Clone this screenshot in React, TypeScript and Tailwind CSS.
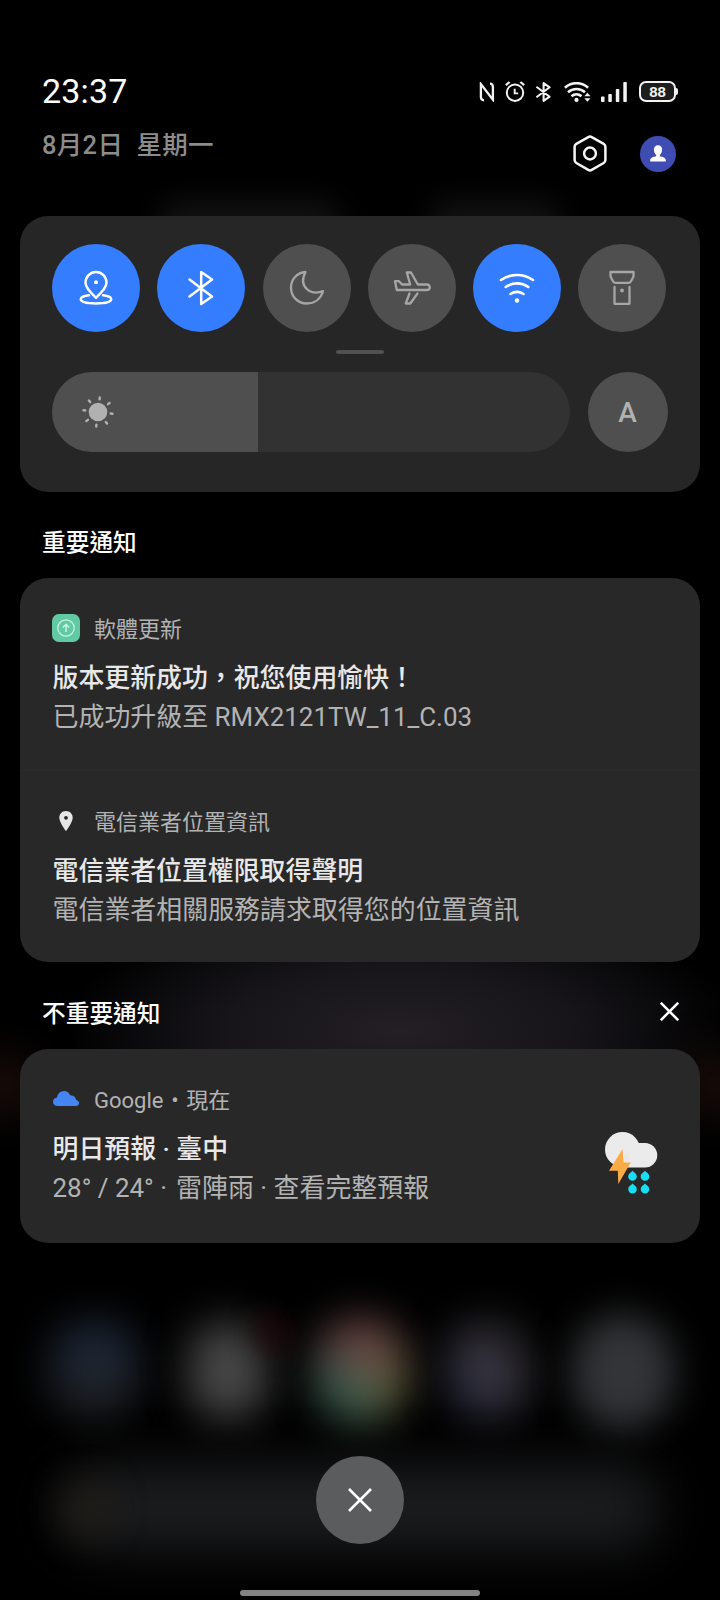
/**
 * Notification shade
 * Design: dark translucent cards over a dimmed, blurred home screen
 * Content: status bar, quick toggles, brightness, notification groups
 */
import type { ReactNode } from "react";

const FONT = "font-['Roboto','Noto_Sans_CJK_TC',sans-serif]";

/* ---------- Status bar icons ---------- */

function NfcIcon() {
  return (
    <svg width="16" height="20" viewBox="0 0 16 20" fill="none" stroke="#f2f2f2" strokeWidth="2.3">
      <path d="M5 18.300C2.800 18.200 1.900 17 1.900 15V2.100L13.900 17.700V5c0-2-.7-3.300-2.900-3.400" />
    </svg>
  );
}

function AlarmIcon() {
  return (
    <svg width="20" height="21" viewBox="0 0 20 21" fill="none" stroke="#f2f2f2" strokeWidth="2">
      <circle cx="10" cy="11.700" r="8.200" />
      <path d="M9.700 7.800v4.600h3.500" strokeWidth="1.900" />
      <path d="M.8 4.200 4.600 1M19.200 4.200 15.400 1" strokeWidth="2.200" />
    </svg>
  );
}

function BluetoothIcon({ className, strokeWidth }: { className: string; strokeWidth: number }) {
  return (
    <svg
      className={className}
      viewBox="0 0 26 36"
      fill="none"
      stroke="currentColor"
      strokeWidth={strokeWidth}
      strokeLinecap="round"
      strokeLinejoin="round"
    >
      <path d="M1.500 9.500 24 26.500 13.200 34V2L24 9.500 1.500 26.500" />
    </svg>
  );
}

function StatusWifiIcon() {
  return (
    <svg width="27" height="20" viewBox="0 0 27 20" fill="none" stroke="#f2f2f2" strokeWidth="2.600">
      <path d="M.9 5.700C7.500-.3 17.500-.3 24.100 5.700" />
      <path d="M4 10.200c4.800-4.300 12.200-4.300 17 0" />
      <path d="M7.500 14.200c3-2.600 7-2.600 10 0" />
      <circle cx="12.500" cy="17.900" r="2.100" fill="#f2f2f2" stroke="none" />
      <path d="m20.300 14.200 3.100-3.500 3.100 3.500zM20.300 16.200l3.100 3.500 3.100-3.500z" fill="#f2f2f2" stroke="none" />
    </svg>
  );
}

function SignalIcon() {
  return (
    <svg width="26" height="20" viewBox="0 0 26 20" fill="#f2f2f2">
      <rect x="0" y="14.500" width="3.500" height="5.500" rx=".8" />
      <rect x="7.300" y="12" width="3.500" height="8" rx=".8" />
      <rect x="14.800" y="7" width="3.500" height="13" rx=".8" />
      <rect x="22.300" y="0" width="3.500" height="20" rx=".8" />
    </svg>
  );
}

function Battery({ level }: { level: number }) {
  return (
    <div className="flex items-center">
      <div className="flex h-[21px] w-[37px] items-center justify-center rounded-[7px] border-2 border-[#f2f2f2] bg-[#1d1d1d] font-['Liberation_Sans',sans-serif] text-[15px] leading-none font-bold text-[#f2f2f2]">
        {level}
      </div>
      <div className="h-[7px] w-[2px] rounded-r-sm bg-[#f2f2f2]" />
    </div>
  );
}

function SettingsIcon() {
  return (
    <svg width="34" height="37" viewBox="0 0 34 37" fill="none" stroke="#f5f5f5" strokeWidth="2.500">
      <path d="M15.300 2.100a3.400 3.400 0 0 1 3.400 0l12 6.700a3.400 3.400 0 0 1 1.700 2.900v13.400a3.400 3.400 0 0 1-1.700 2.900l-12 6.900a3.400 3.400 0 0 1-3.400 0l-12-6.900a3.400 3.400 0 0 1-1.700-2.900V11.700a3.400 3.400 0 0 1 1.700-2.900z" />
      <circle cx="17" cy="18.500" r="5.900" />
    </svg>
  );
}

function Avatar() {
  return (
    <div className="flex size-9 items-center justify-center rounded-full bg-[#3f4db3]">
      <svg width="16" height="17" viewBox="0 0 16 17" fill="#fff">
        <path d="M8 .3C5.400.300 3.900 2.100 3.900 4.500c0 2.500 1 4.600 2.300 5.500v1.200C3.500 11.700.200 12.900.200 15v1.500h15.600V15c0-2.100-3.300-3.300-6-3.800V10c1.300-.9 2.300-3 2.300-5.500C12.100 2.100 10.600.300 8 .300z" />
      </svg>
    </div>
  );
}

/* ---------- Quick toggles ---------- */

const strokeProps = {
  fill: "none",
  stroke: "currentColor",
  strokeWidth: 2.3,
  strokeLinecap: "round",
  strokeLinejoin: "round",
} as const;

const TOGGLES: { name: string; active: boolean; icon: ReactNode }[] = [
  {
    name: "location",
    active: true,
    icon: (
      <svg width="34" height="36" viewBox="0 0 34 36" {...strokeProps} strokeWidth={2.4}>
        <path d="M17 27.800C11.500 22.300 6.500 18 6.500 12.500a10.500 10.500 0 0 1 21 0C27.500 18 22.500 22.300 17 27.800z" />
        <circle cx="17" cy="12.300" r="2" fill="currentColor" stroke="none" />
        <path d="M10 25.300c-5 .6-8.300 2-8.300 4 0 2.600 6.300 4.200 15.300 4.200s15.300-1.600 15.300-4.200c0-2-3.300-3.400-8.300-4" />
      </svg>
    ),
  },
  {
    name: "bluetooth",
    active: true,
    icon: <BluetoothIcon className="h-9 w-[26px]" strokeWidth={2.5} />,
  },
  {
    name: "dnd",
    active: false,
    icon: (
      <svg width="36" height="36" viewBox="0 0 36 36" {...strokeProps}>
        <path d="M16.500 2C8.500 2.500 2 9.200 2 17.500c0 9 6.700 16 15.800 16 8 0 14-4.800 16.200-12.300C22.500 25.500 8.500 17.500 16.500 2z" />
      </svg>
    ),
  },
  {
    name: "airplane",
    active: false,
    icon: (
      <svg width="38" height="36" viewBox="0 0 38 36" {...strokeProps}>
        <path d="M2 11.200 3.800 20h30c3.800 0 4-5.500 0-5.500h-9L18 2.500h-4.200l3.400 12H9L6 11.200z" />
        <path d="M16.500 23.500 12.800 33.500h4.500l7.200-10" />
      </svg>
    ),
  },
  {
    name: "wifi",
    active: true,
    icon: (
      <svg width="36" height="32" viewBox="0 0 36 32" {...strokeProps} strokeWidth={2.6}>
        <path d="M2 8c9.500-6.700 22.500-6.700 32 0M6.700 15c6.800-4.800 15.800-4.800 22.600 0M11.500 22c4-2.600 9-2.600 13 0" />
        <circle cx="18" cy="28.500" r="2.200" fill="currentColor" stroke="none" />
      </svg>
    ),
  },
  {
    name: "flashlight",
    active: false,
    icon: (
      <svg width="26" height="36" viewBox="0 0 26 36" {...strokeProps}>
        <path d="M1.500 2h23v4.500L22 11.200c-.6 1.100-1.300 1.600-2.600 1.600H6.600c-1.300 0-2-.5-2.600-1.600L1.500 6.500z" />
        <path d="M5.500 17v16.800h15V17" />
        <circle cx="13" cy="20.500" r="1.900" fill="currentColor" stroke="none" />
      </svg>
    ),
  },
];

function SunIcon() {
  return (
    <svg width="32" height="32" viewBox="-16 -16 32 32" fill="#b1b1b1" stroke="#b1b1b1" strokeWidth="2.400" strokeLinecap="round">
      <circle r="9.300" stroke="none" />
      <g transform="rotate(7)">
        <path d="M0-12.800v-1.800M0 12.800v1.800M-12.800 0h-1.800M12.800 0h1.800M9-9l1.400-1.400M-9 9l-1.400 1.400M-9-9l-1.400-1.400M9 9l1.400 1.400" />
      </g>
    </svg>
  );
}

function QuickPanel() {
  return (
    <section className="mt-[44px] h-[276px] rounded-[28px] bg-[#262626] px-8 pt-7">
      <div className="flex w-[614.500px] justify-between">
        {TOGGLES.map(({ name, active, icon }) => (
          <div
            key={name}
            className={`flex size-[88px] items-center justify-center rounded-full ${
              active ? "bg-[#347dff] text-white" : "bg-[#4f4f4f] text-[#a6a6a6]"
            }`}
          >
            {icon}
          </div>
        ))}
      </div>
      <div className="mx-auto mt-[18px] h-1 w-12 rounded-sm bg-[#505050]" />
      <div className="mt-[18px] flex justify-between">
        <div className="h-20 w-[518px] overflow-hidden rounded-full bg-[#323232]">
          <div className="flex h-full w-[206px] items-center bg-[#4f4f4f] pl-[30px]">
            <SunIcon />
          </div>
        </div>
        <div className="flex size-20 items-center justify-center rounded-full bg-[#4f4f4f] pt-[2px] pr-px text-[28px] font-medium text-[#b1b1b1]">
          A
        </div>
      </div>
    </section>
  );
}

/* ---------- Notifications ---------- */

function UpdateIcon() {
  return (
    <div className="flex size-7 items-center justify-center rounded-[7px] bg-[#62c9a5]">
      <svg width="18" height="18" viewBox="0 0 18 18" fill="none" stroke="#c9f5e3" strokeWidth="1.200">
        <circle cx="9" cy="9" r="8.200" />
        <path d="M9 13V5.500M5.800 8.500 9 5.300l3.200 3.200" strokeWidth="1.500" />
      </svg>
    </div>
  );
}

function PinIcon() {
  return (
    <svg width="14" height="20" viewBox="0 0 14 20" className="mb-px ml-[7px]">
      <path
        d="M7 0C3.100 0 .300 2.900.300 6.700.300 11.500 7 20 7 20s6.700-8.500 6.700-13.300C13.700 2.900 10.900 0 7 0zm0 4.900a1.900 1.900 0 1 1 0 3.800 1.900 1.900 0 0 1 0-3.800z"
        fill="#e6e6e6"
      />
    </svg>
  );
}

function CloudIcon() {
  return (
    <svg width="26" height="15" viewBox="0 0 26 15" className="mb-px ml-[1px]">
      <path
        d="M4.500 15C2 15 0 13.200 0 10.800c0-2.200 1.700-4 4-4.200C4.600 2.800 7.400 0 11 0c2.900 0 5.400 1.800 6.500 4.500 3.200-.2 5.400 1.800 5.700 4.400C24.900 9.200 26 10.400 26 12c0 1.700-1.300 3-3 3z"
        fill="#4485f3"
      />
    </svg>
  );
}

function StormIcon() {
  return (
    <svg width="53" height="62" viewBox="0 0 53 62">
      <defs>
        <linearGradient id="cloud" x1="0" y1="0" x2="1" y2="0">
          <stop offset="0" stopColor="#e0e0e0" />
          <stop offset=".4" stopColor="#ebebeb" />
        </linearGradient>
      </defs>
      <circle cx="17.500" cy="17.500" r="17.500" fill="#ebebeb" />
      <path d="M9 32.700C18 29 24 11 34 11h6a12.250 12.250 0 0 1 0 24.500H17z" fill="url(#cloud)" />
      <path d="M17.500 17 4 38.800h8.800l.5 13.200 12.500-21.400h-7.300z" fill="#fbab45" />
      {[
        [27.500, 44],
        [40, 44],
        [27.500, 56.700],
        [40, 56.700],
      ].map(([x, y]) => (
        <path
          key={`${x}-${y}`}
          transform={`translate(${x} ${y})`}
          d="M0-5.300C1.200-3.800 4.300-2.400 4.300.400a4.300 4.300 0 0 1-8.600 0C-4.300-2.400-1.200-3.800 0-5.300z"
          fill="#14dff5"
        />
      ))}
    </svg>
  );
}

function Notification({
  icon,
  app,
  title,
  body,
  extra,
}: {
  icon: ReactNode;
  app: string;
  title: string;
  body: string;
  extra?: ReactNode;
}) {
  return (
    <div className="flex h-48 items-start justify-between pl-[32.500px]">
      <div className="pt-8">
        <div className="flex h-9 items-center">
          <div className="-ml-[0.500px] flex w-[42px]">{icon}</div>
          <span className="pt-[3px] text-[22px] leading-9 whitespace-pre text-[#b3b3b3]">{app}</span>
        </div>
        <p className="mt-[13px] text-[25.900px] leading-[39px] font-medium text-[#e8e8e8]">{title}</p>
        <p className="text-[25.950px] leading-[39px] whitespace-pre text-[#b3b3b3]">{body}</p>
      </div>
      {extra}
    </div>
  );
}

function CloseIcon({ size, strokeWidth }: { size: number; strokeWidth: number }) {
  return (
    <svg width={size} height={size} viewBox="0 0 24 24" fill="none" stroke="#fff" strokeWidth={strokeWidth}>
      <path d="M1 1l22 22M23 1 1 23" />
    </svg>
  );
}

/* Dimmed wallpaper, dock icons and search bar behind the shade */
function Backdrop() {
  return (
    <div className="absolute inset-0 overflow-hidden">
      <div className="absolute top-[202px] left-[160px] h-[36px] w-[180px] rounded-full bg-[#131313] blur-[14px]" />
      <div className="absolute top-[202px] left-[430px] h-[36px] w-[130px] rounded-full bg-[#131313] blur-[14px]" />
      <div className="absolute top-[900px] left-[60px] h-[260px] w-[680px] bg-[radial-gradient(closest-side,#231f24,#17151a_50%,transparent)]" />
      <div className="absolute top-[1060px] -left-5 h-[50px] w-[50px] bg-[#21100c] blur-[22px]" />
      <div className="absolute top-[1060px] -right-5 h-[50px] w-[50px] bg-[#21100c] blur-[22px]" />

      <div className="absolute top-[1322px] left-[50px] h-[98px] w-[90px] rounded-[40px] bg-gradient-to-b from-[#1f2b40] to-[#1c1c1c] blur-[20px]" />
      <div className="absolute top-[1322px] left-[188px] h-[98px] w-[80px] rounded-[38px] bg-[#474747] blur-[21px]" />
      <div className="absolute top-[1316px] left-[256px] h-[32px] w-[32px] rounded-full bg-[#24080b] blur-[14px]" />
      <div className="absolute top-[1318px] left-[313px] h-[106px] w-[96px] rounded-full bg-[conic-gradient(#674444_0deg,#674c44_60deg,#625a3c_90deg,#565c40_150deg,#3a5b4e_190deg,#3f574e_270deg,#674444_320deg)] blur-[20px]" />
      <div className="absolute top-[1322px] left-[446px] h-[96px] w-[84px] rounded-[38px] bg-gradient-to-tr from-[#20273f] via-[#38343f] to-[#242424] blur-[21px]" />
      <div className="absolute top-[1314px] left-[572px] h-[116px] w-[102px] rounded-full bg-[#323437] blur-[18px]" />

      <div className="absolute top-[1464px] left-[60px] h-[88px] w-[600px] rounded-[40px] bg-[#1a1b1d] blur-[24px]" />
      <div className="absolute top-[1485px] left-[62px] h-[50px] w-[46px] rounded-full bg-[#221e17] blur-[18px]" />
    </div>
  );
}

export default function App() {
  return (
    <div
      lang="zh-Hant"
      className={`relative h-[1600px] w-[720px] overflow-hidden bg-black text-white ${FONT}`}
    >
      <Backdrop />

      <div className="relative flex h-full flex-col px-5">
        {/* Status bar */}
        <header className="flex h-[172px] justify-between pt-[70px] pr-[22px] pl-[22px]">
          <div>
            <p className="text-[34px] leading-[43px] tracking-[0.2px]">23:37</p>
            <p className="mt-[13px] text-[25.500px] leading-[38px] font-medium tracking-[0.3px] whitespace-pre text-[#8c8c8c]">
              8月2日{"  "}星期一
            </p>
          </div>
          <div className="pt-[11px]">
            <div className="flex h-[21px] items-center">
              <NfcIcon />
              <div className="ml-[10px]">
                <AlarmIcon />
              </div>
              <BluetoothIcon className="ml-[11px] h-5 w-[15px] text-[#f2f2f2]" strokeWidth={3.8} />
              <div className="ml-[13px]">
                <StatusWifiIcon />
              </div>
              <div className="mr-3 ml-[10px]">
                <SignalIcon />
              </div>
              <Battery level={88} />
            </div>
            <div className="mt-[33px] flex items-center justify-end gap-[33px] pr-[2px]">
              <SettingsIcon />
              <Avatar />
            </div>
          </div>
        </header>

        <QuickPanel />

        {/* Important notifications */}
        <div className="flex h-[86px] items-center px-[22px] pt-4">
          <h2 className="text-[23.700px] leading-9 font-medium">重要通知</h2>
        </div>
        <section className="h-[384px] rounded-[28px] bg-[#282828]">
          <Notification
            icon={<UpdateIcon />}
            app="軟體更新"
            title="版本更新成功，祝您使用愉快！"
            body="已成功升級至 RMX2121TW_11_C.03"
          />
          <div className="border-t border-[#2c2c2c]">
            <Notification
              icon={<PinIcon />}
              app="電信業者位置資訊"
              title="電信業者位置權限取得聲明"
              body="電信業者相關服務請求取得您的位置資訊"
            />
          </div>
        </section>

        {/* Silent notifications */}
        <div className="flex h-[87px] items-center justify-between pt-4 pr-[21px] pl-[22px]">
          <h2 className="text-[23.700px] leading-9 font-medium">不重要通知</h2>
          <div className="pb-[5px]">
            <CloseIcon size={19} strokeWidth={3.2} />
          </div>
        </div>
        <section className="h-[194px] rounded-[28px] bg-[#282828]">
          <Notification
            icon={<CloudIcon />}
            app={"Google\u200A • \u200A現在"}
            title="明日預報 · 臺中"
            body={"28° / 24° ·\u200A 雷陣雨 · 查看完整預報"}
            extra={
              <div className="pt-[83px] pr-[42px]">
                <StormIcon />
              </div>
            }
          />
        </section>

        {/* Clear all + gesture bar */}
        <footer className="mt-auto flex flex-col items-center pb-1">
          <div className="flex size-[88px] items-center justify-center rounded-full bg-[#5b5c5d]">
            <CloseIcon size={24} strokeWidth={2.6} />
          </div>
          <div className="mt-[46px] h-[6px] w-60 rounded-full bg-[#828282]" />
        </footer>
      </div>
    </div>
  );
}
